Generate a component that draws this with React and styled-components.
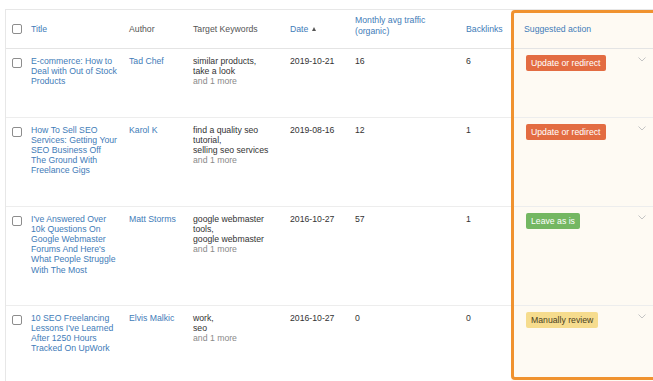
import React from "react";
import styled, { createGlobalStyle } from "styled-components";

const GlobalStyle = createGlobalStyle`
  html, body {
    margin: 0;
    padding: 0;
    background: #ffffff;
    overflow: hidden;
  }
  body {
    font-family: "Liberation Sans", Arial, Helvetica, sans-serif;
    -webkit-font-smoothing: antialiased;
  }
`;

const Page = styled.div`
  padding: 9px 0 0 5px;
  width: 680px;
`;

const Panel = styled.div`
  position: relative;
  background: #ffffff;
  border-top: 1px solid #e7e7e7;
  border-left: 1px solid #e7e7e7;
  width: 660px;
`;

const Table = styled.table`
  border-collapse: separate;
  border-spacing: 0;
  table-layout: fixed;
  width: 655px;
  font-size: 8.7px;
  color: #333333;
`;

const Th = styled.th`
  padding: ${(p) => (p.$tall ? "5px 8px 11px 0" : "0 8px 0 0")};
  vertical-align: middle;
  text-align: left;
  font-weight: normal;
  line-height: 11px;
  color: ${(p) => (p.$link ? "#3f7cb8" : "#555555")};
  border-bottom: 1px solid #e4e4e4;
  background: ${(p) => (p.$hl ? "#fefaf3" : "transparent")};
  padding-left: ${(p) => (p.$hl ? "13px" : "0")};
`;

const Td = styled.td`
  padding: 7px 8px 30px 0;
  vertical-align: top;
  line-height: 10.2px;
  white-space: nowrap;
  border-bottom: 1px solid #ededed;
  background: ${(p) => (p.$hl ? "#fefaf3" : "transparent")};
  padding-left: ${(p) => (p.$hl ? "15px" : "0")};
  padding-right: ${(p) => (p.$hl ? "15px" : "8px")};
`;

const Box = styled.span`
  display: block;
  width: 10px;
  height: 10px;
  box-sizing: border-box;
  border: 1px solid #8d8d8d;
  border-radius: 2px;
  background: #fff;
  margin-left: 6px;
  margin-top: ${(p) => (p.$row ? "2px" : "0")};
`;

const Link = styled.a`
  color: #3f7cb8;
  text-decoration: none;
  display: block;
`;

const Keyword = styled.div`
  color: #333333;
`;

const More = styled.div`
  color: #8a8a8a;
`;

const SortArrow = styled.span`
  display: inline-block;
  margin-left: 4px;
  vertical-align: 1px;
  width: 0;
  height: 0;
  border-left: 2.5px solid transparent;
  border-right: 2.5px solid transparent;
  border-bottom: 4px solid #555;
`;

const ActionCell = styled.div`
  display: flex;
  justify-content: space-between;
  align-items: flex-start;
`;

const badgeColors = {
  update: { bg: "#e36c42", fg: "#ffffff" },
  leave: { bg: "#74b762", fg: "#ffffff" },
  review: { bg: "#f6dc8e", fg: "#4a3f22" },
};

const Badge = styled.span`
  display: inline-block;
  margin-top: -1px;
  height: 16px;
  line-height: 16px;
  padding: 0 5px;
  border-radius: 2px;
  background: ${(p) => badgeColors[p.$kind].bg};
  color: ${(p) => badgeColors[p.$kind].fg};
`;

const Chevron = styled.svg`
  display: block;
  margin-top: 1px;
  flex: none;
`;

const Highlight = styled.div`
  position: absolute;
  left: 505px;
  top: 0;
  width: 160px;
  height: 370px;
  box-sizing: border-box;
  border: 3px solid #f0922f;
  border-radius: 4px;
  pointer-events: none;
`;

const rows = [
  {
    title: ["E-commerce: How to", "Deal with Out of Stock", "Products"],
    author: "Tad Chef",
    keywords: ["similar products,", "take a look"],
    date: "2019-10-21",
    traffic: "16",
    backlinks: "6",
    action: { kind: "update", label: "Update or redirect" },
  },
  {
    title: [
      "How To Sell SEO",
      "Services: Getting Your",
      "SEO Business Off",
      "The Ground With",
      "Freelance Gigs",
    ],
    author: "Karol K",
    keywords: ["find a quality seo", "tutorial,", "selling seo services"],
    date: "2019-08-16",
    traffic: "12",
    backlinks: "1",
    action: { kind: "update", label: "Update or redirect" },
  },
  {
    title: [
      "I've Answered Over",
      "10k Questions On",
      "Google Webmaster",
      "Forums And Here's",
      "What People Struggle",
      "With The Most",
    ],
    author: "Matt Storms",
    keywords: ["google webmaster", "tools,", "google webmaster"],
    date: "2016-10-27",
    traffic: "57",
    backlinks: "1",
    action: { kind: "leave", label: "Leave as is" },
  },
  {
    title: [
      "10 SEO Freelancing",
      "Lessons I've Learned",
      "After 1250 Hours",
      "Tracked On UpWork",
    ],
    author: "Elvis Malkic",
    keywords: ["work,", "seo"],
    date: "2016-10-27",
    traffic: "0",
    backlinks: "0",
    action: { kind: "review", label: "Manually review" },
  },
];

const Lines = ({ lines }) =>
  lines.map((l, i) => (
    <React.Fragment key={i}>
      {l}
      {i < lines.length - 1 && <br />}
    </React.Fragment>
  ));

export default function App() {
  return (
    <>
      <GlobalStyle />
      <Page>
        <Panel>
          <Table>
            <colgroup>
              <col style={{ width: 25 }} />
              <col style={{ width: 98 }} />
              <col style={{ width: 64 }} />
              <col style={{ width: 97 }} />
              <col style={{ width: 65 }} />
              <col style={{ width: 111 }} />
              <col style={{ width: 45 }} />
              <col style={{ width: 150 }} />
            </colgroup>
            <thead>
              <tr>
                <Th>
                  <Box />
                </Th>
                <Th $link>Title</Th>
                <Th>Author</Th>
                <Th>Target Keywords</Th>
                <Th $link>
                  Date
                  <SortArrow />
                </Th>
                <Th $link $tall>
                  Monthly avg traffic
                  <br />
                  (organic)
                </Th>
                <Th $link>Backlinks</Th>
                <Th $link $hl>
                  Suggested action
                </Th>
              </tr>
            </thead>
            <tbody>
              {rows.map((r, i) => (
                <tr key={i}>
                  <Td>
                    <Box $row />
                  </Td>
                  <Td>
                    <Link href="#">
                      <Lines lines={r.title} />
                    </Link>
                  </Td>
                  <Td>
                    <Link href="#">{r.author}</Link>
                  </Td>
                  <Td>
                    {r.keywords.map((k, j) => (
                      <Keyword key={j}>{k}</Keyword>
                    ))}
                    <More>and 1 more</More>
                  </Td>
                  <Td>{r.date}</Td>
                  <Td>{r.traffic}</Td>
                  <Td>{r.backlinks}</Td>
                  <Td $hl>
                    <ActionCell>
                      <Badge $kind={r.action.kind}>{r.action.label}</Badge>
                      <Chevron width="8" height="5" viewBox="0 0 8 5">
                        <polyline
                          points="0.5,0.5 4,4 7.5,0.5"
                          fill="none"
                          stroke="#c4c4c4"
                          strokeWidth="1"
                        />
                      </Chevron>
                    </ActionCell>
                  </Td>
                </tr>
              ))}
            </tbody>
          </Table>
          <Highlight />
        </Panel>
      </Page>
    </>
  );
}
